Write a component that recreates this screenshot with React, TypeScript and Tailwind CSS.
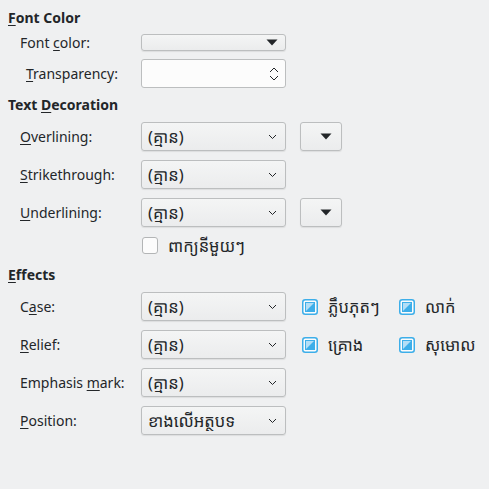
import { ReactNode } from 'react'

function Mn({ pre, key_, post }: { pre?: string; key_: string; post?: string }) {
  return (
    <span>
      {pre}
      <span className="underline underline-offset-2">{key_}</span>
      {post}
    </span>
  )
}

function Km({ children }: { children: ReactNode }) {
  return <span className="text-[16.5px] leading-[20px]">{children}</span>
}

function Chevron() {
  return (
    <svg width="9" height="6" viewBox="0 0 9 6" className="shrink-0">
      <path d="M1 1l3.5 3.5L8 1" fill="none" stroke="#232629" strokeWidth="1" />
    </svg>
  )
}

function Triangle() {
  return (
    <svg width="12" height="7" viewBox="0 0 12 7">
      <path d="M0.5 0.5h11L6 6.5z" fill="#232629" />
    </svg>
  )
}

function Combo({ value }: { value: string }) {
  return (
    <div className="w-[145px] h-[29px] flex items-center justify-between pl-[6px] pr-[8px] rounded-[3px] border border-[#bcbebf] bg-gradient-to-b from-[#f4f5f5] to-[#ebeced] shadow-[0_1px_1px_rgba(0,0,0,0.08)]">
      <Km>{value}</Km>
      <Chevron />
    </div>
  )
}

function ColorButton() {
  return (
    <div className="w-[42px] h-[29px] flex items-center justify-end pr-[9px] rounded-[3px] border border-[#bcbebf] bg-gradient-to-b from-[#f4f5f5] to-[#ebeced] shadow-[0_1px_1px_rgba(0,0,0,0.08)]">
      <Triangle />
    </div>
  )
}

function TriCheck({ label }: { label: string }) {
  return (
    <div className="flex items-center gap-[10px]">
      <svg width="16" height="16" viewBox="0 0 16 16" className="shrink-0">
        <rect x="0.75" y="0.75" width="14.5" height="14.5" rx="2.5" fill="#fcfcfc" stroke="#3daee9" strokeWidth="1.5" />
        <rect x="3.5" y="3.5" width="9" height="9" fill="#b3def6" stroke="#3daee9" />
        <path d="M12 4v8H4z" fill="#3daee9" />
      </svg>
      <Km>{label}</Km>
    </div>
  )
}

function Row({ label, indent, children }: { label: ReactNode; indent?: boolean; children: ReactNode }) {
  return (
    <div className="flex items-center h-[29px]">
      <div className={indent ? 'w-[133px] pl-[18px]' : 'w-[133px] pl-[12px]'}>{label}</div>
      {children}
    </div>
  )
}

function Heading({ children, className }: { children: ReactNode; className?: string }) {
  return <div className={`h-[18px] leading-[18px] font-bold ${className ?? ''}`}>{children}</div>
}

export default function App() {
  return (
    <div
      className="w-[489px] h-[489px] bg-[#eff0f1] text-[#232629] text-[14px] pl-[8px] pt-[9px] overflow-hidden"
      style={{ fontFamily: '"Noto Sans", "Noto Sans Khmer", "DejaVu Sans", sans-serif' }}
    >
      <Heading>
        <Mn key_="F" post="ont Color" />
      </Heading>

      <div className="flex items-center h-[17px] mt-[7px]">
        <div className="w-[133px] pl-[12px]">
          <Mn pre="Font " key_="c" post="olor:" />
        </div>
        <div className="w-[145px] h-[17px] flex items-center justify-end pr-[7px] rounded-[3px] border border-[#bcbebf] bg-gradient-to-b from-[#f4f5f5] to-[#ebeced] shadow-[0_1px_1px_rgba(0,0,0,0.08)]">
          <Triangle />
        </div>
      </div>

      <div className="mt-[8px]">
        <Row indent label={<Mn key_="T" post="ransparency:" />}>
          <div className="w-[145px] h-[29px] flex items-center justify-end pr-[6px] rounded-[3px] border border-[#bcbebf] bg-[#fcfcfc]">
            <svg width="10" height="18" viewBox="0 0 10 18">
              <path d="M1 7l4-4 4 4" fill="none" stroke="#232629" strokeWidth="1" />
              <path d="M1 11l4 4 4-4" fill="none" stroke="#232629" strokeWidth="1" />
            </svg>
          </div>
        </Row>
      </div>

      <Heading className="mt-[8px]">
        <Mn pre="Text " key_="D" post="ecoration" />
      </Heading>

      <div className="mt-[8px] flex flex-col gap-[9px]">
        <Row label={<Mn key_="O" post="verlining:" />}>
          <Combo value="(គ្មាន)" />
          <div className="ml-[14px]">
            <ColorButton />
          </div>
        </Row>
        <Row label={<Mn key_="S" post="trikethrough:" />}>
          <Combo value="(គ្មាន)" />
        </Row>
        <Row label={<Mn key_="U" post="nderlining:" />}>
          <Combo value="(គ្មាន)" />
          <div className="ml-[14px]">
            <ColorButton />
          </div>
        </Row>
      </div>

      <div className="mt-[10px] h-[17px] flex items-center pl-[134px] gap-[10px]">
        <div className="w-[16px] h-[17px] rounded-[3px] border border-[#b3b5b6] bg-[#fcfcfc]" />
        <Km>ពាក្យនីមួយៗ</Km>
      </div>

      <Heading className="mt-[12px]">
        <Mn key_="E" post="ffects" />
      </Heading>

      <div className="mt-[8px] flex flex-col gap-[9px]">
        <Row label={<Mn pre="C" key_="a" post="se:" />}>
          <Combo value="(គ្មាន)" />
          <div className="ml-[16px] w-[97px]">
            <TriCheck label="ភ្លឹបភុតៗ" />
          </div>
          <TriCheck label="លាក់" />
        </Row>
        <Row label={<Mn key_="R" post="elief:" />}>
          <Combo value="(គ្មាន)" />
          <div className="ml-[16px] w-[97px]">
            <TriCheck label="គ្រោង" />
          </div>
          <TriCheck label="សុមោល" />
        </Row>
        <Row label={<Mn pre="Emphasis " key_="m" post="ark:" />}>
          <Combo value="(គ្មាន)" />
        </Row>
        <Row label={<Mn key_="P" post="osition:" />}>
          <Combo value="ខាងលើអត្ថបទ" />
        </Row>
      </div>
    </div>
  )
}
